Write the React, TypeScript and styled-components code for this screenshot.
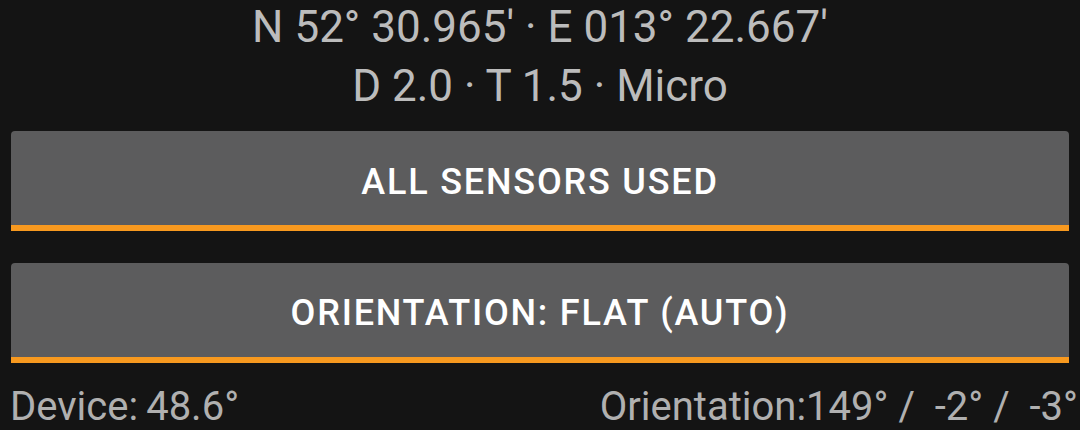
import { FC } from 'react';
import styled, { createGlobalStyle } from 'styled-components';

const GlobalStyle = createGlobalStyle`
html, body{
    margin: 0;
    padding: 0;
    background-color: #141414;
}
body{
    font-family: Roboto, "Liberation Sans", sans-serif;
    overflow: hidden;
}
`;

const Screen = styled.div`
    width: 1080px;
    height: 430px;
    background-color: #141414;
    overflow: hidden;
`;

const Coords = styled.div`
    margin-top: -2px;
    text-align: center;
    color: #bcbcbc;
    font-size: 44px;
    line-height: 59px;
    white-space: pre;
`;

const ButtonList = styled.div`
    display: flex;
    flex-direction: column;
    gap: 32px;
    padding: 0 11px;
    margin-top: 15px;
`;

const ActionButton = styled.button<{ $shift: number }>`
    display: flex;
    align-items: center;
    justify-content: center;
    box-sizing: border-box;
    height: 100px;
    width: 100%;
    padding: ${p => p.$shift}px 0 0 0;
    border: none;
    border-bottom: 6px solid #f7991f;
    border-radius: 4px 4px 0 0;
    background-color: #5c5c5d;
    color: #ffffff;
    font-family: Roboto, "Liberation Sans", sans-serif;
    font-weight: 500;
    font-size: 36px;
    letter-spacing: 1.8px;
    line-height: 42px;
    text-transform: uppercase;
    cursor: pointer;
`;

const StatusRow = styled.div`
    display: flex;
    justify-content: space-between;
    margin-top: 20px;
    padding: 0 2px 0 10px;
    color: #b0b0b0;
    font-size: 40px;
    line-height: 48px;
    white-space: pre;
`;

const Value = styled.span`
    margin-left: 8px;
`;

const App: FC = () => {
    return (
        <Screen>
            <GlobalStyle />
            <Coords>
                <div>N 52° 30.965' · E 013° 22.667'</div>
                <div>D 2.0 · T 1.5 · Micro</div>
            </Coords>
            <ButtonList>
                <ActionButton $shift={8}>All sensors used</ActionButton>
                <ActionButton $shift={6}>Orientation: flat (auto)</ActionButton>
            </ButtonList>
            <StatusRow>
                <span>Device:<Value>48.6°</Value></span>
                <span>Orientation:149° /  -2° /  -3°</span>
            </StatusRow>
        </Screen>
    );
};

export default App;
